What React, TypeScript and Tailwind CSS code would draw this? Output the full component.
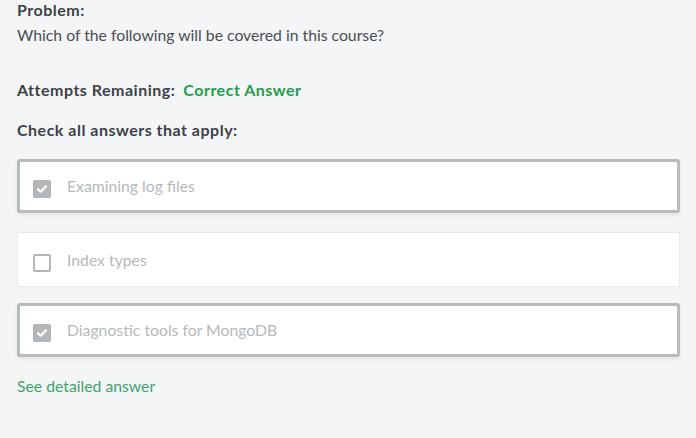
import React from "react";

type Option = { label: string; checked: boolean; className: string };

const options: Option[] = [
  { label: "Examining log files", checked: true, className: "mt-[18px] h-[54px]" },
  { label: "Index types", checked: false, className: "mt-[19px] h-[55px]" },
  { label: "Diagnostic tools for MongoDB", checked: true, className: "mt-[16px] h-[54px]" },
];

function CheckBox({ checked }: { checked: boolean }) {
  if (checked) {
    return (
      <span className="mt-[6px] flex h-[18px] w-[18px] shrink-0 items-center justify-center rounded-[2px] bg-[#b2b6b9]">
        <svg width="12" height="12" viewBox="0 0 12 12" fill="none">
          <path d="M2 6.2l2.6 2.6L10 3.4" stroke="#fff" strokeWidth="2.2" strokeLinecap="round" strokeLinejoin="round" />
        </svg>
      </span>
    );
  }
  return <span className="mt-[6px] block h-[18px] w-[18px] shrink-0 rounded-[2px] border-2 border-[#b2b6b9] bg-white" />;
}

export default function App() {
  return (
    <div className="h-[438px] w-full bg-[#f4f5f7] px-[17px] font-['Lato',sans-serif] text-[15.75px] text-[#3d4246]">
      <h3 className="text-[16px] font-bold leading-[20px] tracking-[0.5px]">Problem:</h3>
      <p className="mt-[3px] leading-[24px] text-[#4a4e52]">Which of the following will be covered in this course?</p>

      <div className="mt-[32px] flex items-center gap-[8px] text-[16px] font-bold leading-[22px] tracking-[0.5px]">
        <span>Attempts Remaining:</span>
        <span className="text-[#1f9d4c]">Correct Answer</span>
      </div>
      <div className="mt-[18px] text-[16px] font-bold leading-[22px] tracking-[0.5px]">Check all answers that apply:</div>

      <ul className="flex w-[663px] flex-col">
        {options.map((o) => (
          <li
            key={o.label}
            className={
              (o.checked
                ? "flex items-center gap-[16px] rounded-[3px] border-[3px] border-[#b8bcbf] bg-white pl-[13px] shadow-[0_2px_4px_rgba(0,0,0,0.08)] "
                : "flex items-center gap-[16px] border border-[#e6e8ea] bg-white pl-[15px] ") + o.className
            }
          >
            <CheckBox checked={o.checked} />
            <span className="text-[#b5b9bc]">{o.label}</span>
          </li>
        ))}
      </ul>

      <a href="#" className="mt-[18px] block leading-[22px] text-[#3ea36b]">
        See detailed answer
      </a>
    </div>
  );
}
